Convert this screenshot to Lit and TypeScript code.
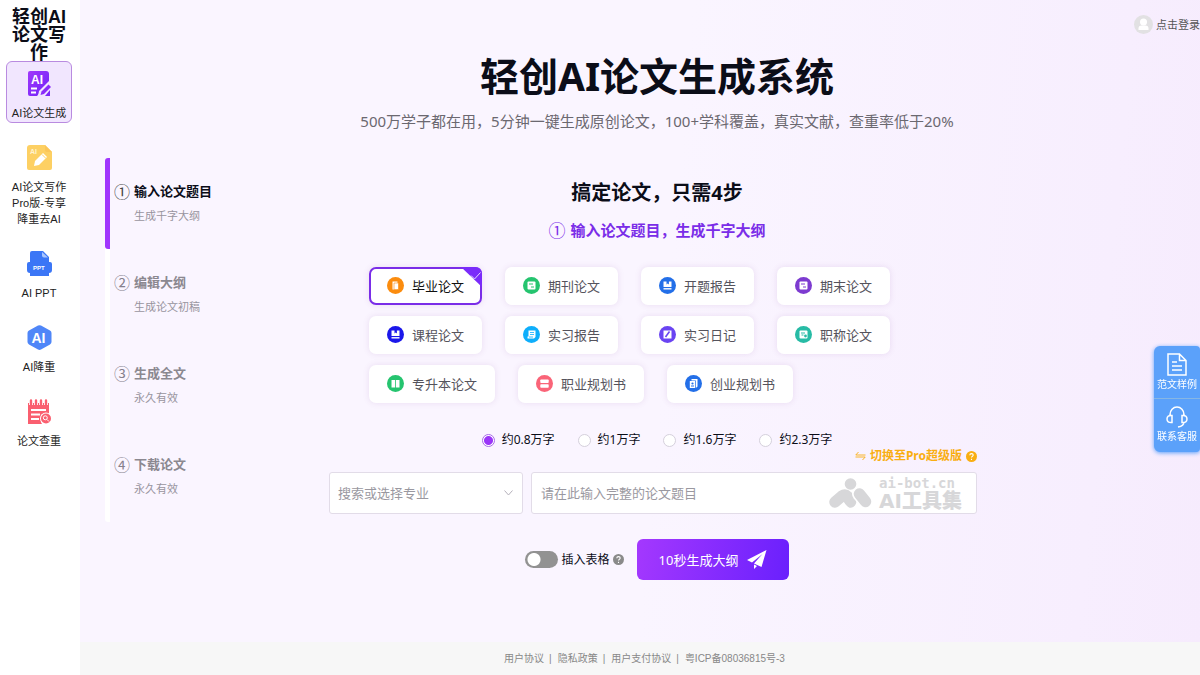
import { LitElement, html, css, svg } from "lit";
import { customElement, state } from "lit/decorators.js";
import { classMap } from "lit/directives/class-map.js";

const navIcons = [
  svg`<defs><linearGradient id="g1" x1="0" y1="0" x2="1" y2="1"><stop offset="0" stop-color="#a238fb"/><stop offset="1" stop-color="#6c22f8"/></linearGradient></defs>
    <path fill="url(#g1)" d="M3 0h16q3 0 3 3v8L10 25H3q-2 0-2-2V2q0-2 2-2z"/>
    <path d="M11 25l1-5L22 10l3 3-10 10z" fill="#f1e6fe"/>
    <path d="M13.500 24l1-3.500 7-7 2.500 2.500-7 7z" fill="#8a2cf9"/><path d="M18 25h5v-6z" fill="#7b28f8"/>
    <text x="4" y="12.500" font-size="12" font-weight="700" fill="#fff">AI</text>
    <path d="M4 17.500h6M4 21.500h5" stroke="#fff" stroke-width="1.800"/>`,
  svg`<path fill="#fdd063" d="M3 0h15l7 7v16q0 2-2 2H2q-2 0-2-2V3q0-3 3-3z"/>
    <path fill="#fbc658" d="M18 0l7 7h-5q-2 0-2-2z"/>
    <text x="3" y="9" font-size="7" font-weight="700" fill="#fff3cf">AI</text>
    <path fill="#fff" d="M7 21l1-5 8-8 4 4-8 8z"/><path d="M15 9.500l3.800 3.800" stroke="#fdd063"/>`,
  svg`<path fill="#3b76f6" d="M5 0h11l6 6v5h1q2 0 2 2v6q0 3-3 3v3H3v-3q-3 0-3-3v-6q0-2 2-2h1V2q0-2 2-2z"/>
    <path fill="#a9c6ff" d="M15 1l6 5.500h-4q-2 0-2-2z"/>
    <text x="6" y="18.500" font-size="6" font-weight="700" fill="#fff">PPT</text>`,
  svg`<path fill="#4f86f8" d="M11 .6q1.500-.8 3 0l9 5q1.500.8 1.500 2.500v9q0 1.500-1.500 2.400l-9 5q-1.500.8-3 0l-9-5Q.5 18.600.5 17.100V8q0-1.600 1.500-2.400z"/>
    <text x="4.500" y="17.500" font-size="14" font-weight="700" fill="#fff">AI</text>`,
  svg`<path fill="#fa5f6f" d="M1 4h21v12a6 6 0 0 0-7 9H1z"/>
    <path d="M4 1v5M9 1v5M14 1v5M19 1v5" stroke="#fff" stroke-width="4"/>
    <path d="M4 1.500v4M9 1.500v4M14 1.500v4M19 1.500v4" stroke="#fa5f6f" stroke-width="2.400" stroke-linecap="round"/>
    <path d="M4 11h15M4 15.500h9M4 20h8" stroke="#fff" stroke-width="1.800"/>
    <circle cx="19" cy="19.500" r="6" fill="#fff"/><circle cx="19" cy="19.500" r="5" fill="#fa5f6f"/>
    <circle cx="18.300" cy="18.800" r="2" fill="none" stroke="#fff"/><path d="M20 20.500l2 2" stroke="#fff"/>`,
];
const navItems = ["AI论文生成", "AI论文写作Pro版-专享降重去AI", "AI PPT", "AI降重", "论文查重"];

const glyphs = {
  copy: svg`<path d="M5.500 4.500h5v8h-5z" fill="#fff"/><path d="M7 6h4.500v6.500H7z" fill="#fff" stroke="currentColor" stroke-width=".6"/>`,
  doc: svg`<rect x="4.500" y="4.500" width="8" height="8" rx="1" fill="#fff"/><path d="M6 7h4M8 10h3" stroke="currentColor"/>`,
  book: svg`<path d="M4.500 4.500h8v5.500h-8z" fill="#fff"/><path d="M4.500 11.800h8" stroke="#fff" stroke-width="1.400"/><path d="M7.500 4v3.500l1.200-1 1.200 1V4z" fill="currentColor"/>`,
  scroll: svg`<path d="M5.500 4.500h7v6.500l-1.500 1.500H4.500v-2h1z" fill="#fff"/><path d="M7 6.500h4M7 8.500h4M6 11h4" stroke="currentColor" stroke-width=".8"/>`,
  pen: svg`<rect x="4.500" y="4.500" width="8" height="8" fill="#fff"/><path d="M10.500 5.500l-4 5.500" stroke="currentColor" stroke-width="1.600"/>`,
  badge: svg`<rect x="4.500" y="4.500" width="8" height="8" rx="1" fill="#fff"/><path d="M6 7h4M6.500 9h2" stroke="currentColor"/><circle cx="10.500" cy="10" r="1.400" fill="currentColor"/>`,
  open: svg`<path d="M4.500 5h3.600v7.500H4.500zM8.900 5h3.600v7.500H8.900z" fill="#fff"/>`,
  cards: svg`<rect x="4.300" y="4.500" width="8.400" height="3.500" rx=".8" fill="#fff"/><rect x="4.300" y="9.200" width="8.400" height="3.500" rx=".8" fill="#fff"/>`,
  plan: svg`<path d="M6.500 4h6v7.500l-1 1h-.6V5.500H6.500z" fill="#fff"/><path d="M4.800 6h5.400v7H4.800z" fill="#fff"/><circle cx="7.500" cy="8.500" r="1.100" fill="currentColor"/><path d="M6 11h3" stroke="currentColor"/>`,
};
type Glyph = keyof typeof glyphs;
const kinds: { name: string; color: string; glyph: Glyph }[][] = [
  [
    { name: "毕业论文", color: "#fb8c0e", glyph: "copy" },
    { name: "期刊论文", color: "#25c46f", glyph: "doc" },
    { name: "开题报告", color: "#236fe8", glyph: "book" },
    { name: "期末论文", color: "#7d3bd0", glyph: "doc" },
  ],
  [
    { name: "课程论文", color: "#1b17ea", glyph: "book" },
    { name: "实习报告", color: "#0eaefb", glyph: "scroll" },
    { name: "实习日记", color: "#6a44f2", glyph: "pen" },
    { name: "职称论文", color: "#27bba5", glyph: "badge" },
  ],
  [
    { name: "专升本论文", color: "#25c46f", glyph: "open" },
    { name: "职业规划书", color: "#fa6478", glyph: "cards" },
    { name: "创业规划书", color: "#236fe8", glyph: "plan" },
  ],
];
const steps = [
  ["①", "输入论文题目", "生成千字大纲"],
  ["②", "编辑大纲", "生成论文初稿"],
  ["③", "生成全文", "永久有效"],
  ["④", "下载论文", "永久有效"],
];
const lengths = ["约0.8万字", "约1万字", "约1.6万字", "约2.3万字"];
const legal = ["用户协议", "隐私政策", "用户支付协议", "粤ICP备08036815号-3"];

@customElement("app-root")
export class AppRoot extends LitElement {
  @state() private kind = "毕业论文";
  @state() private length = 0;
  @state() private withTable = false;

  static styles = css`
    :host {
      display: flex;
      min-height: 100vh;
      font-family: "Noto Sans", "Noto Sans CJK SC", sans-serif;
      color: #0b0d18;
      background: linear-gradient(95deg, #faf5ff 55%, #f7eefe 90%, #f6ebfd);
    }
    * { box-sizing: border-box; }
    h1, h2, h3, p { margin: 0; }
    button, input, select { font-family: inherit; margin: 0; }
    button { cursor: pointer; }
    a { color: inherit; text-decoration: none; }
    svg { display: block; flex: none; }

    .side {
      flex: none;
      width: 80px;
      padding: 8px 8px 0 6px;
      background: #fff;
      font-family: "Liberation Sans", "Noto Sans CJK SC", sans-serif;
    }
    .brand {
      font-size: 18px;
      line-height: 18px;
      font-weight: 700;
      text-align: center;
      padding: 0 5px;
      height: 53px;
    }
    .nav { display: flex; flex-direction: column; gap: 12px; }
    .nav a {
      display: flex;
      flex-direction: column;
      align-items: center;
      gap: 9px;
      padding: 9px 3px 1px;
      border: 1px solid transparent;
      border-radius: 6px;
      font-size: 11px;
      line-height: 16px;
      text-align: center;
      color: #222;
    }
    .nav a.on { background: #f1e6fe; border-color: #b98be0; }

    .main { flex: 1; min-width: 0; display: flex; flex-direction: column; }
    .top { display: flex; justify-content: flex-end; padding-top: 12px; }
    .login {
      display: flex;
      align-items: center;
      gap: 3px;
      height: 24px;
      font-size: 11px;
      color: #555;
      white-space: nowrap;
    }
    .hero { padding: 16px 0 0 34px; text-align: center; }
    h1 { font-size: 39px; line-height: 48px; font-weight: 700; }
    .hero p { margin-top: 9px; font-size: 15px; line-height: 24px; color: #6b6870; }

    .work { display: flex; padding: 25px 190px 62px 25px; flex: 1; align-items: flex-start; }
    .steps {
      flex: none;
      width: 199px;
      margin: 0;
      padding: 0;
      list-style: none;
      border-radius: 3px;
      background: linear-gradient(#fff, #fff) left / 5px 100% no-repeat;
    }
    .steps li {
      display: grid;
      grid-template-columns: 20px 1fr;
      align-content: start;
      row-gap: 7px;
      height: 91px;
      padding: 23px 0 0 9px;
      border-radius: 3px;
      color: #8b8890;
    }
    .steps li.on {
      color: #0b0d18;
      background: linear-gradient(#a035fd, #a035fd) left / 5px 100% no-repeat;
    }
    .num { font-family: "Noto Sans CJK SC", sans-serif; font-size: 16px; line-height: 20px; color: #85808c; }
    .on .num { color: #444; }
    h3 { font-size: 13px; line-height: 20px; font-weight: 700; }
    .steps p { grid-column: 2; font-size: 11px; line-height: 16px; color: #98949e; }

    .panel { flex: 1; min-width: 0; padding: 20px 25px 0; }
    h2 { font-size: 20px; line-height: 30px; text-align: center; }
    .now {
      display: flex;
      justify-content: center;
      gap: 5px;
      margin-top: 12px;
      font-size: 15px;
      line-height: 20px;
      font-weight: 700;
      color: #7a2de8;
    }
    .now span { font-size: 17px; font-weight: 400; font-family: "Noto Sans CJK SC", sans-serif; }
    .kinds { display: grid; gap: 11px; margin-top: 27px; padding-left: 40px; }
    .row { display: flex; gap: 23px; }
    .kind {
      position: relative;
      display: flex;
      align-items: center;
      gap: 8px;
      height: 38px;
      padding: 0 16px 1px;
      border: 2px solid #fff;
      border-radius: 7px;
      background: #fff;
      box-shadow: 0 0 6px rgba(120, 60, 150, 0.13);
      font-size: 13px;
      line-height: 18px;
      color: #55535c;
      white-space: nowrap;
    }
    .kind.on { border-color: #7a2de8; color: #111; }
    .tick { position: absolute; top: -2px; right: -2px; }

    fieldset { border: 0; margin: 29px 0 0; padding: 0; display: flex; justify-content: center; gap: 23px; }
    fieldset label { display: flex; align-items: center; gap: 7px; font-size: 12px; line-height: 16px; }
    fieldset input {
      appearance: none;
      width: 13px;
      height: 13px;
      border: 1px solid #d5d0dc;
      border-radius: 50%;
      background: #fff;
    }
    fieldset input:checked {
      border-color: #a86be8;
      background: radial-gradient(circle, #9a35f8 4px, #fff 5px);
    }
    .swap { display: flex; justify-content: flex-end; padding-right: 8px; }
    .swap a { display: flex; align-items: center; gap: 4px; font-size: 12px; line-height: 16px; font-weight: 700; color: #f9ae12; }
    .fields { display: grid; grid-template-columns: 10fr 23fr; gap: 8px; margin-top: 8px; padding-right: 8px; }
    .field { position: relative; display: flex; align-items: center; }
    .field select, .field input {
      width: 100%;
      height: 42px;
      padding: 0 9px;
      border: 1px solid #e2dce8;
      border-radius: 3px;
      background: #fff;
      font-size: 13px;
      color: #9a98a0;
      appearance: none;
      outline: none;
    }
    .field select { padding: 0 8px; }
    .field input::placeholder { color: #9a98a0; opacity: 1; }
    .arrow { position: absolute; right: 10px; pointer-events: none; }
    .mark {
      position: absolute;
      right: 15px;
      display: flex;
      align-items: center;
      gap: 7px;
      color: #d7d7d9;
      pointer-events: none;
    }
    .mark div { display: grid; }
    .mark b { font: 700 14px/16px "DejaVu Sans Mono", monospace; }
    .mark i { font: 900 20px/20px "DejaVu Sans", "Noto Sans CJK SC", sans-serif; }

    .go { display: flex; justify-content: center; align-items: center; gap: 13px; margin-top: 25px; }
    .opt { display: flex; align-items: center; gap: 3px; }
    .opt label { display: flex; align-items: center; gap: 4px; font-size: 12px; line-height: 16px; }
    .opt input {
      appearance: none;
      width: 33px;
      height: 17px;
      border-radius: 9px;
      background: radial-gradient(circle at 9px 50%, #fff 6px, #929292 7px);
    }
    .opt input:checked { background: radial-gradient(circle at 24px 50%, #fff 6px, #8a2df8 7px); }
    .submit {
      display: flex;
      align-items: center;
      gap: 9px;
      height: 41px;
      padding: 0 22px;
      border: 0;
      border-radius: 6px;
      background: linear-gradient(100deg, #a438fe, #6a20fd);
      color: #fff;
      font-size: 13px;
    }

    footer {
      display: flex;
      justify-content: center;
      gap: 5px;
      padding: 9px 0 8px 9px;
      background: #f7f7f7;
      font-family: "Liberation Sans", "Noto Sans CJK SC", sans-serif;
      font-size: 10px;
      line-height: 16px;
      color: #888;
    }
    footer a + a::before { content: "|"; margin-right: 6px; }
    .dock {
      position: fixed;
      top: 346px;
      right: 0;
      width: 46px;
      border-radius: 6px 4px 4px 6px;
      background: #5ba1fa;
      box-shadow: 0 1px 4px #5ba1fa;
    }
    .dock a {
      display: flex;
      flex-direction: column;
      align-items: center;
      height: 52px;
      padding-top: 7px;
      font-size: 10px;
      line-height: 16px;
      color: #fff;
      white-space: nowrap;
    }
    .dock a + a { height: 54px; border-top: 1px solid #86b6e4; }
  `;

  private help(color: string) {
    return html`<svg width="11" height="11" viewBox="0 0 11 11" aria-hidden="true">
      <circle cx="5.500" cy="5.500" r="5.500" fill=${color} />
      <path d="M3.800 4.300q0-1.700 1.700-1.700t1.700 1.500q0 .9-1 1.400-.7.400-.7 1.100M5.500 7.700v1.200" fill="none" stroke="#fff" stroke-width="1.100" />
    </svg>`;
  }

  render() {
    return html`
      <aside class="side">
        <div class="brand">轻创AI论文写作</div>
        <nav class="nav">
          ${navItems.map((t, i) => html`<a href="#" class=${classMap({ on: i === 0 })}>
            <svg width="25" height="25" viewBox="0 0 25 25" aria-hidden="true">${navIcons[i]}</svg><span>${t}</span></a>`)}
        </nav>
      </aside>
      <div class="main">
        <div class="top">
          <a href="#" class="login">
            <svg width="19" height="19" viewBox="0 0 19 19"><circle cx="9.500" cy="9.500" r="9.500" fill="#e2e1e3" />
              <circle cx="9.500" cy="7" r="3.500" fill="#fff" /><path d="M4.500 15v-1.500q0-3 3-3h4q3 0 3 3V15z" fill="#fff" /></svg>
            点击登录</a>
        </div>
        <header class="hero">
          <h1>轻创AI论文生成系统</h1>
          <p>500万学子都在用，5分钟一键生成原创论文，100+学科覆盖，真实文献，查重率低于20%</p>
        </header>
        <div class="work">
          <ol class="steps">
            ${steps.map(([n, t, d], i) => html`<li class=${classMap({ on: i === 0 })}>
              <span class="num">${n}</span><h3>${t}</h3><p>${d}</p></li>`)}
          </ol>
          <main class="panel">
            <h2>搞定论文，只需4步</h2>
            <p class="now"><span>①</span>输入论文题目，生成千字大纲</p>
            <div class="kinds">
              ${kinds.map((r) => html`<div class="row">
                ${r.map((k) => html`<button type="button" class=${classMap({ kind: true, on: k.name === this.kind })}
                  aria-pressed=${k.name === this.kind} @click=${() => (this.kind = k.name)}>
                  <svg width="17" height="17" viewBox="0 0 17 17" color=${k.color}>
                    <circle cx="8.500" cy="8.500" r="8.500" fill="currentColor" />${glyphs[k.glyph]}</svg>${k.name}
                  ${k.name === this.kind
                    ? html`<svg class="tick" width="21" height="20" viewBox="0 0 21 20"><path d="M0 0h14q7 0 7 7v13z" fill="#7a2bfa" />
                        <path d="M10 8.500l3.500 3.500 6-6.500" fill="none" stroke="#e6d5ff" /></svg>`
                    : ""}
                </button>`)}
              </div>`)}
            </div>
            <fieldset aria-label="字数">
              ${lengths.map((t, i) => html`<label><input type="radio" name="length" .checked=${i === this.length}
                @change=${() => (this.length = i)} />${t}</label>`)}
            </fieldset>
            <div class="swap"><a href="#">
              <svg width="11" height="10" viewBox="0 0 11 10"><path d="M3.500 1L.8 4h9.700M7.500 9l2.700-3H.5" fill="none" stroke="#f9ae12" stroke-width=".9" /></svg>
              切换至Pro超级版 ${this.help("#f9ae12")}</a></div>
            <div class="fields">
              <div class="field">
                <select aria-label="搜索或选择专业"><option>搜索或选择专业</option></select>
                <svg class="arrow" width="9" height="6" viewBox="0 0 9 6"><path d="M.5.5l4 4.500 4-4.500" fill="none" stroke="#b4b0ba" /></svg>
              </div>
              <div class="field">
                <input type="text" aria-label="论文题目" placeholder="请在此输入完整的论文题目" />
                <div class="mark">
                  <svg width="43" height="31" viewBox="0 0 43 31" fill="#d7d7d9"><circle cx="21.500" cy="6" r="5.800" />
                    <path d="M6 24L13 18Q16 16 18.500 18.500L21.500 24" fill="none" stroke="#d7d7d9" stroke-width="11.500" stroke-linecap="round" stroke-linejoin="round" />
                    <path d="M30 16L36.500 23.500" stroke="#fff" stroke-width="14" stroke-linecap="round" />
                    <path d="M30.500 16L36.500 23.500" stroke="#d7d7d9" stroke-width="11.500" stroke-linecap="round" />
                    <path d="M8 31l7-6 6 6z" fill="#fff" /></svg>
                  <div><b>ai-bot.cn</b><i>AI工具集</i></div>
                </div>
              </div>
            </div>
            <div class="go">
              <div class="opt">
                <label><input type="checkbox" role="switch" .checked=${this.withTable}
                  @change=${() => (this.withTable = !this.withTable)} />插入表格</label>
                ${this.help("#8a8a8a")}
              </div>
              <button type="button" class="submit">10秒生成大纲
                <svg width="20" height="19" viewBox="0 0 20 19" fill="#fff"><path d="M19.500 0L0 10l5 2.500L15.500 4 7 13.500l7.500 3.500zM7 14.500V19l3-3z" /></svg>
              </button>
            </div>
          </main>
        </div>
        <footer>${legal.map((t) => html`<a href="#">${t}</a>`)}</footer>
      </div>
      <div class="dock">
        <a href="#"><svg width="20" height="23" viewBox="0 0 20 23" fill="none" stroke="#fff" stroke-width="1.500"><path d="M1 1h11.500L19 7.500V22H1zM12.500 1v6.500H19M5 9h5M5 13h10M5 17h10" /></svg>范文样例</a>
        <a href="#"><svg width="22" height="22" viewBox="0 0 22 22" fill="none" stroke="#fff" stroke-width="1.500"><path d="M4 10V8.500a7 7.500 0 0 1 14 0V10M18 16q0 4-6 5M6 9.500v7q-5 .5-5-3.500t5-3.500zM16 9.500v7q5 .5 5-3.500t-5-3.500z" /></svg>联系客服</a>
      </div>
    `;
  }
}
